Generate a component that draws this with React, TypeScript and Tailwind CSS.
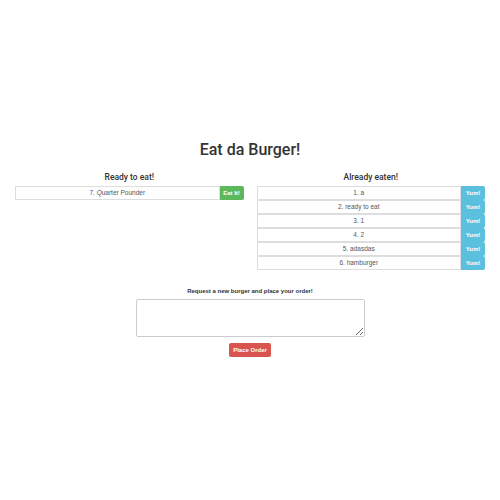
import React from 'react';

const eaten = ['1. a', '2. ready to eat', '3. 1', '4. 2', '5. adasdas', '6. hamburger'];

const Row = ({ name, label, btn }: { name: string; label: string; btn: string }) => (
  <div className="flex h-[14px]">
    <div className="flex-1 flex items-center justify-center border border-[#ddd] bg-white text-[6.5px] text-[#555]">
      {name}
    </div>
    <button className={`w-[24px] h-[14px] flex items-center justify-center text-[6px] font-bold text-white rounded-r-[2px] ${btn}`}>
      {label}
    </button>
  </div>
);

export default function App() {
  return (
    <div className="w-[500px] h-[500px] bg-white text-[#333]" style={{ fontFamily: '"Liberation Sans", Arial, sans-serif' }}>
      <div className="pt-[140px] flex flex-col items-center">
        <h1 className="text-[16px] font-medium leading-[20px] text-[#333]" style={{ fontFamily: 'Roboto, sans-serif' }}>
          Eat da Burger!
        </h1>
      </div>
      <div className="flex gap-[13px] px-[15px] mt-[12px]">
        <div className="flex-1">
          <h3 className="text-center text-[8.5px] leading-[10px] mb-[4px] font-medium" style={{ fontFamily: 'Roboto, sans-serif' }}>
            Ready to eat!
          </h3>
          <Row name="7. Quarter Pounder" label="Eat It!" btn="bg-[#5cb85c]" />
        </div>
        <div className="flex-1">
          <h3 className="text-center text-[8.5px] leading-[10px] mb-[4px] font-medium" style={{ fontFamily: 'Roboto, sans-serif' }}>
            Already eaten!
          </h3>
          <div className="flex flex-col">
            {eaten.map((e) => (
              <Row key={e} name={e} label="Yum!" btn="bg-[#5bc0de]" />
            ))}
          </div>
        </div>
      </div>
      <div className="flex flex-col items-center mt-[17px]">
        <label className="text-[6px] font-bold leading-[8px] mb-[4px]">Request a new burger and place your order!</label>
        <textarea className="w-[229px] h-[38px] border border-[#ccc] rounded-[2px] resize-y" />
        <button className="mt-[6px] w-[42px] h-[14px] bg-[#d9534f] text-white text-[6px] font-bold rounded-[2px]">
          Place Order
        </button>
      </div>
    </div>
  );
}
